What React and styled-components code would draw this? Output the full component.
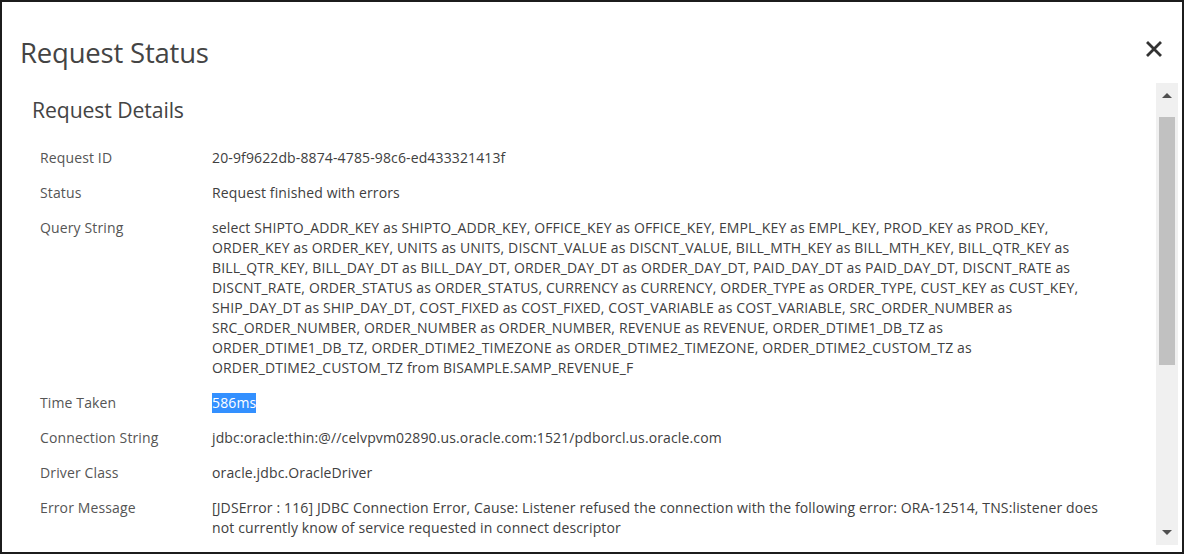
import styled, { createGlobalStyle } from 'styled-components'

const Global = createGlobalStyle`
  html, body {
    margin: 0;
    padding: 0;
    background: #fff;
  }
  body {
    font-family: 'Open Sans', 'Noto Sans', sans-serif;
    color: #333;
  }
`

const Modal = styled.div`
  width: 1184px;
  height: 554px;
  box-sizing: border-box;
  border: 2px solid #1c1c1c;
  background: #fff;
  display: flex;
  flex-direction: column;
  overflow: hidden;
`

const Header = styled.div`
  height: 81px;
  display: flex;
  align-items: center;
  justify-content: space-between;
  padding: 20px 18px 0 18px;
  box-sizing: border-box;
`

const Title = styled.h1`
  margin: 0;
  font-size: 27.5px;
  font-weight: 400;
  color: #444;
  letter-spacing: -0.2px;
`

const Close = styled.button`
  border: none;
  background: none;
  padding: 0;
  margin-bottom: 7px;
  width: 20px;
  height: 20px;
  display: flex;
  align-items: center;
  justify-content: center;
  cursor: pointer;
`

const Body = styled.div`
  flex: 1;
  display: flex;
  min-height: 0;
`

const Content = styled.div`
  flex: 1;
  padding: 12px 0 0 30px;
  overflow: hidden;
`

const SectionTitle = styled.h2`
  margin: 0 0 24px;
  font-size: 21.2px;
  font-weight: 400;
  color: #444;
  letter-spacing: -0.1px;
`

const Grid = styled.div`
  display: grid;
  grid-template-columns: 172px 1fr;
  row-gap: 15px;
  padding-left: 8px;
  font-size: 14px;
  letter-spacing: 0.13px;
  line-height: 20px;
`

const Label = styled.div`
  color: #555;
`

const Value = styled.div`
  color: #404040;
`

const Line = styled.div`
  white-space: nowrap;
`

const Selected = styled.span`
  background: #3390ff;
  color: #fff;
  padding: 0 0 1px;
`

const Scrollbar = styled.div`
  width: 22px;
  margin: 0 4px 7px 0;
  background: #f0f0f0;
  display: flex;
  flex-direction: column;
  align-items: center;
`

const Arrow = styled.div`
  height: 24px;
  display: flex;
  align-items: center;
  justify-content: center;
`

const Thumb = styled.div`
  width: 16px;
  height: 248px;
  margin-top: 10px;
  background: #c1c1c1;
`

const Spacer = styled.div`
  flex: 1;
`

const query = [
  'select SHIPTO_ADDR_KEY as SHIPTO_ADDR_KEY, OFFICE_KEY as OFFICE_KEY, EMPL_KEY as EMPL_KEY, PROD_KEY as PROD_KEY,',
  'ORDER_KEY as ORDER_KEY, UNITS as UNITS, DISCNT_VALUE as DISCNT_VALUE, BILL_MTH_KEY as BILL_MTH_KEY, BILL_QTR_KEY as',
  'BILL_QTR_KEY, BILL_DAY_DT as BILL_DAY_DT, ORDER_DAY_DT as ORDER_DAY_DT, PAID_DAY_DT as PAID_DAY_DT, DISCNT_RATE as',
  'DISCNT_RATE, ORDER_STATUS as ORDER_STATUS, CURRENCY as CURRENCY, ORDER_TYPE as ORDER_TYPE, CUST_KEY as CUST_KEY,',
  'SHIP_DAY_DT as SHIP_DAY_DT, COST_FIXED as COST_FIXED, COST_VARIABLE as COST_VARIABLE, SRC_ORDER_NUMBER as',
  'SRC_ORDER_NUMBER, ORDER_NUMBER as ORDER_NUMBER, REVENUE as REVENUE, ORDER_DTIME1_DB_TZ as',
  'ORDER_DTIME1_DB_TZ, ORDER_DTIME2_TIMEZONE as ORDER_DTIME2_TIMEZONE, ORDER_DTIME2_CUSTOM_TZ as',
  'ORDER_DTIME2_CUSTOM_TZ from BISAMPLE.SAMP_REVENUE_F',
]

const rows = [
  { label: 'Request ID', lines: ['20-9f9622db-8874-4785-98c6-ed433321413f'] },
  { label: 'Status', lines: ['Request finished with errors'] },
  { label: 'Query String', lines: query },
  { label: 'Time Taken', selected: '586ms' },
  { label: 'Connection String', lines: ['jdbc:oracle:thin:@//celvpvm02890.us.oracle.com:1521/pdborcl.us.oracle.com'] },
  { label: 'Driver Class', lines: ['oracle.jdbc.OracleDriver'] },
  {
    label: 'Error Message',
    lines: [
      '[JDSError : 116] JDBC Connection Error, Cause: Listener refused the connection with the following error: ORA-12514, TNS:listener does',
      'not currently know of service requested in connect descriptor',
    ],
  },
]

const App = () => {
  return (
    <>
      <Global />
      <Modal>
        <Header>
          <Title>Request Status</Title>
          <Close aria-label='Close'>
            <svg width='16' height='16' viewBox='0 0 16 16'>
              <path d='M2 2 L14 14 M14 2 L2 14' stroke='#333' strokeWidth='2.8' strokeLinecap='square' />
            </svg>
          </Close>
        </Header>
        <Body>
          <Content>
            <SectionTitle>Request Details</SectionTitle>
            <Grid>
              {rows.map((row) => [
                <Label key={row.label + '-l'}>{row.label}</Label>,
                <Value key={row.label + '-v'}>
                  {row.selected ? (
                    <Selected>{row.selected}</Selected>
                  ) : (
                    row.lines.map((l, i) => <Line key={i}>{l}</Line>)
                  )}
                </Value>,
              ])}
            </Grid>
          </Content>
          <Scrollbar>
            <Arrow>
              <svg width='10' height='6' viewBox='0 0 10 6'>
                <path d='M0 6 L5 1 L10 6 Z' fill='#505050' />
              </svg>
            </Arrow>
            <Thumb />
            <Spacer />
            <Arrow>
              <svg width='10' height='6' viewBox='0 0 10 6'>
                <path d='M0 0 L5 5 L10 0 Z' fill='#505050' />
              </svg>
            </Arrow>
          </Scrollbar>
        </Body>
      </Modal>
    </>
  )
}

export default App
